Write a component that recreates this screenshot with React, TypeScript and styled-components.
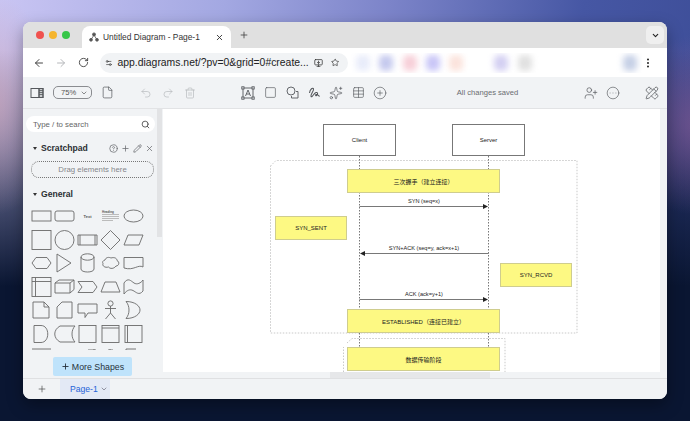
import styled, { createGlobalStyle } from "styled-components";
import {
  ArrowLeft,
  ArrowRight,
  ChevronDown,
  CircleEllipsis,
  CircleHelp,
  CirclePlus,
  EllipsisVertical,
  File,
  MonitorDown,
  Pencil,
  PencilRuler,
  Plus,
  Redo2,
  RotateCw,
  Search,
  Settings2,
  Sparkles,
  Square,
  Star,
  Table,
  Trash2,
  Undo2,
  UserPlus,
  X,
} from "lucide-react";
import type { ReactNode } from "react";

const GlobalStyle = createGlobalStyle`
  html, body {
    margin: 0;
    width: 690px;
    height: 421px;
    overflow: hidden;
  }
  body {
    font-family: "Liberation Sans", Arial, sans-serif;
  }
`;

const Desktop = styled.div`
  width: 690px;
  height: 421px;
  box-sizing: border-box;
  padding: 22px 23px;
  background:
    radial-gradient(90px 90px at 700px 125px, rgba(130, 90, 150, 0.75), transparent),
    radial-gradient(60px 110px at -5px 105px, rgba(205, 165, 185, 0.7), transparent),
    linear-gradient(180deg, rgba(9, 20, 48, 0) 12%, rgba(9, 20, 48, 0.55) 40%, #0a1632 68%),
    linear-gradient(98deg, #c9c5f3 0%, #a3a8e2 30%, #7c84c9 52%, #4657a4 78%, #3c4c96 100%);
`;

const Window = styled.div`
  width: 644px;
  height: 377px;
  border-radius: 8px;
  overflow: hidden;
  display: flex;
  flex-direction: column;
  background: #f1f3f5;
  box-shadow: 0 6px 16px rgba(0, 0, 0, 0.35);
`;

const TabStrip = styled.div`
  height: 26px;
  flex: none;
  display: flex;
  align-items: flex-end;
  background: #e0e0e0;
`;

const Lights = styled.div`
  display: flex;
  gap: 5px;
  align-self: center;
  padding: 0 0 0 13px;
  width: 59px;
  box-sizing: border-box;
`;

const Light = styled.span<{ $color: string }>`
  width: 8px;
  height: 8px;
  border-radius: 50%;
  background: ${(p) => p.$color};
`;

const ActiveTab = styled.div`
  width: 149px;
  height: 22px;
  box-sizing: border-box;
  padding: 0 7px 0 7px;
  display: flex;
  align-items: center;
  gap: 4px;
  background: #fff;
  border-radius: 8px 8px 0 0;
  font-size: 8.4px;
  color: #333;
`;

const TabTitle = styled.span`
  flex: 1;
  white-space: nowrap;
`;

const NewTab = styled.div`
  margin-left: 8px;
  align-self: center;
  display: flex;
  color: #444;
`;

const StripEnd = styled.div`
  margin-left: auto;
  margin-right: 3px;
  align-self: center;
  width: 18px;
  height: 18px;
  border-radius: 5px;
  background: #efefef;
  display: flex;
  align-items: center;
  justify-content: center;
  color: #222;
`;

const AddressRow = styled.div`
  height: 29px;
  flex: none;
  display: flex;
  align-items: center;
  background: #fff;
  padding: 0 0 0 5px;
`;

const NavButton = styled.div<{ $color?: string }>`
  width: 22px;
  height: 22px;
  display: flex;
  align-items: center;
  justify-content: center;
  color: ${(p) => p.$color || "#444"};
`;

const UrlPill = styled.div`
  width: 248px;
  height: 20px;
  margin-left: 6px;
  flex: none;
  box-sizing: border-box;
  padding: 0 5px 0 5px;
  border-radius: 10px;
  background: #f1f3f5;
  display: flex;
  align-items: center;
  gap: 5px;
  color: #333;
`;

const UrlText = styled.span`
  flex: 1;
  font-size: 10.4px;
  color: #222;
  white-space: nowrap;
`;

const Extensions = styled.div`
  width: 292px;
  height: 20px;
  margin-left: 2px;
  flex: none;
  display: flex;
  align-items: center;
  padding-left: 6px;
  box-sizing: border-box;
  overflow: hidden;
`;

const ExtBlob = styled.span<{ $color: string; $gap: number }>`
  width: 14px;
  height: 16px;
  flex: none;
  margin-right: ${(p) => p.$gap}px;
  border-radius: 5px;
  background: ${(p) => p.$color};
  filter: blur(3px);
`;

const Toolbar = styled.div`
  height: 32px;
  flex: none;
  box-sizing: border-box;
  padding: 0 4px 0 3px;
  display: flex;
  align-items: center;
  background: #f1f3f5;
  border-bottom: 1px solid #e2e3e5;
`;

const ToolButton = styled.div<{ $left?: number; $muted?: boolean }>`
  width: 22px;
  height: 22px;
  flex: none;
  margin-left: ${(p) => p.$left || 0}px;
  display: flex;
  align-items: center;
  justify-content: center;
  color: ${(p) => (p.$muted ? "#b4b6ba" : "#55585c")};
`;

const ZoomPill = styled.div`
  width: 39px;
  height: 13px;
  margin-left: 5px;
  flex: none;
  box-sizing: border-box;
  padding: 0 3px 0 7px;
  border: 1px solid #8a8c90;
  border-radius: 5px;
  display: flex;
  align-items: center;
  justify-content: space-between;
  font-size: 7.6px;
  color: #555;
`;

const SaveStatus = styled.div`
  flex: 1;
  text-align: center;
  font-size: 7.6px;
  color: #6a6c70;
  padding-left: 4px;
`;

const Main = styled.div`
  flex: 1;
  min-height: 0;
  display: flex;
`;

const Sidebar = styled.div`
  position: relative;
  width: 140px;
  flex: none;
  box-sizing: border-box;
  padding: 7px 8px 0 3px;
  display: flex;
  flex-direction: column;
  background: #f1f3f5;
`;

const SideThumb = styled.div`
  position: absolute;
  top: 0;
  right: 1px;
  width: 5px;
  height: 128px;
  background: #e2e3e5;
`;

const SearchBox = styled.div`
  height: 16px;
  flex: none;
  box-sizing: border-box;
  padding: 0 5px 0 7px;
  border-radius: 8px;
  background: #fff;
  display: flex;
  align-items: center;
  justify-content: space-between;
  font-size: 7.8px;
  color: #666;
`;

const SectionHeader = styled.div`
  height: 16px;
  margin-top: 8px;
  flex: none;
  display: flex;
  align-items: center;
  padding-left: 7px;
  font-size: 8.6px;
  font-weight: bold;
  color: #2c2f33;
`;

const Caret = styled.span`
  width: 0;
  height: 0;
  margin-right: 4px;
  border-left: 2.5px solid transparent;
  border-right: 2.5px solid transparent;
  border-top: 3px solid #333;
`;

const HeaderActions = styled.div`
  margin-left: auto;
  display: flex;
  gap: 3px;
  padding-right: 1px;
  color: #6a6c70;
`;

const DropZone = styled.div`
  height: 17px;
  margin: 5px 1px 0 5px;
  flex: none;
  box-sizing: border-box;
  border: 1px dotted #777;
  border-radius: 8px;
  display: flex;
  align-items: center;
  justify-content: center;
  font-size: 7.8px;
  color: #85878b;
`;

const ShapeGrid = styled.div`
  height: 146px;
  margin: 2px 0 0 4px;
  flex: none;
  overflow: hidden;
  display: grid;
  grid-template-columns: repeat(5, 23px);
  grid-auto-rows: 23.5px;
`;

const ShapeIcon = styled.svg`
  width: 23px;
  height: 24px;
  fill: none;
  stroke: #6a6a6a;
  stroke-width: 0.9;
`;

const MoreShapes = styled.div`
  width: 79px;
  height: 19px;
  margin: 7px 0 0 27px;
  flex: none;
  display: flex;
  align-items: center;
  justify-content: center;
  gap: 2px;
  border-radius: 2px;
  background: #bfe3fb;
  font-size: 8.8px;
  color: #27323c;
`;

const CanvasColumn = styled.div`
  flex: 1;
  min-width: 0;
  display: flex;
  flex-direction: column;
`;

const CanvasRow = styled.div`
  flex: 1;
  min-height: 0;
  display: flex;
`;

const Canvas = styled.div`
  position: relative;
  flex: 1;
  overflow: hidden;
  background: #fff;
`;

const VScroll = styled.div`
  width: 7px;
  flex: none;
  background: #f1f3f5;
`;

const HScroll = styled.div`
  height: 6px;
  flex: none;
  padding-left: 167px;
  background: #f1f3f5;
`;

const HThumb = styled.div`
  width: 160px;
  height: 100%;
  background: #e6e7e9;
`;

const DiagramLines = styled.svg`
  position: absolute;
  left: 0;
  top: 0;
`;

const Node = styled.div<{ $x: number; $y: number; $w: number; $h: number; $plain?: boolean }>`
  position: absolute;
  left: ${(p) => p.$x}px;
  top: ${(p) => p.$y}px;
  width: ${(p) => p.$w}px;
  height: ${(p) => p.$h}px;
  box-sizing: border-box;
  display: flex;
  align-items: center;
  justify-content: center;
  font-size: 6px;
  white-space: nowrap;
  color: #222;
  font-family: "Liberation Sans", "Noto Sans CJK SC", sans-serif;
  background: ${(p) => (p.$plain ? "#fff" : "#fdf983")};
  border: 1px solid ${(p) => (p.$plain ? "#777" : "#cfcd8e")};
`;

const ArrowLabel = styled.div<{ $x: number; $y: number }>`
  position: absolute;
  left: ${(p) => p.$x}px;
  top: ${(p) => p.$y}px;
  transform: translateX(-50%);
  font-size: 5.6px;
  line-height: 7px;
  white-space: nowrap;
  color: #222;
`;

const Footer = styled.div`
  height: 21px;
  flex: none;
  box-sizing: border-box;
  display: flex;
  align-items: stretch;
  background: #f1f3f5;
  border-top: 1px solid #dfe0e2;
`;

const AddPage = styled.div`
  width: 37px;
  display: flex;
  align-items: center;
  justify-content: center;
  color: #444;
`;

const PageTab = styled.div`
  width: 50px;
  box-sizing: border-box;
  padding-left: 10px;
  display: flex;
  align-items: center;
  gap: 2px;
  background: #e3e9f5;
  font-size: 8.6px;
  color: #2563d8;
`;

function FavIcon() {
  return (
    <svg width="10" height="10" viewBox="0 0 10 10" fill="#555" stroke="#555" strokeWidth="0.8">
      <circle cx="5" cy="2.4" r="1.5" />
      <circle cx="2" cy="7.8" r="1.4" />
      <circle cx="8" cy="7.8" r="1.4" />
      <path d="M5 3 L2 7.8 M5 3 L8 7.8" fill="none" />
    </svg>
  );
}

function PanelIcon() {
  return (
    <svg width="14" height="12" viewBox="0 0 14 12" fill="none" stroke="#55585c" strokeWidth="1">
      <rect x="1" y="1.5" width="12" height="9" />
      <path d="M9 1.5 V10.5" />
      <path d="M9 3.5 H13 M9 5.5 H13 M9 7.5 H13" strokeWidth="0.8" />
      <rect x="9" y="1.5" width="4" height="9" fill="#55585c" fillOpacity="0.25" />
    </svg>
  );
}

function TextToolIcon() {
  return (
    <svg width="14" height="14" viewBox="0 0 14 14" fill="none" stroke="#55585c" strokeWidth="0.9">
      <rect x="2" y="2" width="10" height="10" />
      <rect x="0.8" y="0.8" width="2.2" height="2.2" fill="#f1f3f5" />
      <rect x="11" y="0.8" width="2.2" height="2.2" fill="#f1f3f5" />
      <rect x="0.8" y="11" width="2.2" height="2.2" fill="#f1f3f5" />
      <rect x="11" y="11" width="2.2" height="2.2" fill="#f1f3f5" />
      <path d="M4.5 10 L7 4 L9.5 10 M5.4 8 H8.6" />
    </svg>
  );
}

function ShapesToolIcon() {
  return (
    <svg width="13" height="13" viewBox="0 0 13 13" fill="none" stroke="#55585c" strokeWidth="0.9">
      <circle cx="5" cy="5" r="4" />
      <path d="M10 5.5 H12 V12 H5.5 V10" />
    </svg>
  );
}

function FreehandIcon() {
  return (
    <svg width="13" height="13" viewBox="0 0 13 13" fill="none" stroke="#55585c" strokeWidth="1.1">
      <path d="M1.5 7 C2 3 5 1 5.5 3 C6 5 2 9 3 10.5 C4 12 6 7 8 6.5 C10 6 10 8.5 8.5 9.5 C7.5 10.2 7 8.5 8.5 8.5 C10 8.5 11 10 11.5 10.5" />
    </svg>
  );
}

function Shape({ children }: { children?: ReactNode }) {
  return <ShapeIcon viewBox="0 0 23 24">{children}</ShapeIcon>;
}

const shapes: ReactNode[] = [
  <rect x="2" y="7" width="19" height="10" />,
  <rect x="2" y="7" width="19" height="10" rx="2" />,
  <text x="11.5" y="13.5" fontSize="4" fontWeight="bold" fill="#555" stroke="none" textAnchor="middle" fontFamily="Liberation Sans">Text</text>,
  <>
    <text x="3" y="8.5" fontSize="3" fontWeight="bold" fill="#555" stroke="none" fontFamily="Liberation Sans">Heading</text>
    <path d="M3 10.5 H20 M3 12.5 H20 M3 14.5 H20 M3 16.5 H14" stroke="#bbb" strokeWidth="1" />
  </>,
  <ellipse cx="11.5" cy="12" rx="9.5" ry="6" />,

  <rect x="2" y="2.5" width="19" height="19" />,
  <circle cx="11.5" cy="12" r="9.5" />,
  <path d="M2 7 H21 V17 H2 Z M4 7 V17 M19 7 V17" />,
  <path d="M11.5 2.5 L21 12 L11.5 21.5 L2 12 Z" />,
  <path d="M6 7 H21 L17 17 H2 Z" />,

  <path d="M6 6.5 H17 L21 12 L17 17.5 H6 L2 12 Z" />,
  <path d="M4 3 L18 12 L4 21 Z" />,
  <>
    <ellipse cx="11.5" cy="6" rx="6.5" ry="3.2" />
    <path d="M5 6 V18 C5 22 18 22 18 18 V6" />
  </>,
  <path d="M6 9 C7 6 10 6 12 7 C15 6 18 7 18 9.5 C21 11 20 15 17 15 C15 18 11 18 9.5 16 C6 17 3 15 4 12.5 C3 11 4 9.5 6 9 Z" />,
  <path d="M2 6.5 H21 V16 C16 13 12 20 2 17 Z" />,

  <>
    <rect x="2" y="2.5" width="19" height="19" />
    <path d="M5.5 2.5 V21.5 M2 6.5 H21" />
  </>,
  <path d="M2 8 L6 5 H21 V14.5 L17 18 H2 Z M2 8 H17 V18 M17 8 L21 5" />,
  <path d="M2 6.5 H17 L21 12 L17 17.5 H2 L6 12 Z" />,
  <path d="M6 7 H17 L21 17 H2 Z" />,
  <path d="M2 8 C6 2 9 6 12 8 C15 10 19 8 21 5 V16 C17 21 14 17 11 15.5 C8 14 5 15 2 19 Z" />,

  <path d="M3 4 H14 L19 9 V20 H3 Z M14 4 V9 H19" />,
  <path d="M9 4 H19 V20 H4 V9 Z" />,
  <path d="M2 6 H21 V15 H12 L9 19.5 V15 H2 Z" />,
  <>
    <circle cx="11.5" cy="5.5" r="2.6" />
    <path d="M11.5 8 V15 M6 10.5 H17 M11.5 15 L6.5 21 M11.5 15 L16.5 21" />
  </>,
  <path d="M4 3.5 C13 3.5 18 8 18 12 C18 16 13 20.5 4 20.5 C8 16 8 8 4 3.5 Z" />,

  <path d="M4 3.5 H11 C20 3.5 20 20.5 11 20.5 H4 Z" />,
  <path d="M7 4 H22 C18 8 18 16 22 20 H7 C0 16 0 8 7 4 Z" />,
  <rect x="3" y="3.5" width="17" height="17" />,
  <>
    <rect x="3" y="3.5" width="17" height="17" />
    <path d="M3 6 H20" />
  </>,
  <>
    <rect x="3" y="3.5" width="17" height="17" />
    <path d="M5.5 3.5 V20.5" />
  </>,

  <path d="M2 4 H21" />,
  <path d="" />,
  <path d="M12 5 H20 M18 4 V7" />,
  <path d="M9 5 H14 M11 4 V7" />,
  <path d="M4 6 V4 H14" />,
];

const blobs: [string, number][] = [
  ["#e8ecfa", 9],
  ["#c5c9ee", 10],
  ["#f7cfd8", 9],
  ["#c9c6f7", 9],
  ["#fbe3dc", 31],
  ["#d3cff2", 10],
  ["#e0e0e0", 91],
  ["#c6d0e6", 0],
];

export default function App() {
  return (
    <>
      <GlobalStyle />
      <Desktop>
        <Window>
          <TabStrip>
            <Lights>
              <Light $color="#f0524f" />
              <Light $color="#f5b52e" />
              <Light $color="#37c648" />
            </Lights>
            <ActiveTab>
              <FavIcon />
              <TabTitle>Untitled Diagram - Page-1</TabTitle>
              <X size={9} strokeWidth={2.4} color="#333" />
            </ActiveTab>
            <NewTab>
              <Plus size={10} strokeWidth={2} />
            </NewTab>
            <StripEnd>
              <ChevronDown size={9} strokeWidth={3} />
            </StripEnd>
          </TabStrip>

          <AddressRow>
            <NavButton><ArrowLeft size={12} /></NavButton>
            <NavButton $color="#b5b7ba"><ArrowRight size={12} /></NavButton>
            <NavButton><RotateCw size={11} /></NavButton>
            <UrlPill>
              <Settings2 size={10} />
              <UrlText>app.diagrams.net/?pv=0&amp;grid=0#create...</UrlText>
              <MonitorDown size={12} />
              <Star size={11} style={{ marginLeft: 3, marginRight: 4 }} />
            </UrlPill>
            <Extensions>
              {blobs.map(([color, gap], i) => (
                <ExtBlob key={i} $color={color} $gap={gap} />
              ))}
            </Extensions>
            <EllipsisVertical size={12} color="#333" strokeWidth={2.4} />
          </AddressRow>

          <Toolbar>
            <ToolButton><PanelIcon /></ToolButton>
            <ZoomPill>
              75%
              <ChevronDown size={8} />
            </ZoomPill>
            <ToolButton $left={4}><File size={13} strokeWidth={1.3} /></ToolButton>
            <ToolButton $left={17} $muted><Undo2 size={12} strokeWidth={1.3} /></ToolButton>
            <ToolButton $muted><Redo2 size={12} strokeWidth={1.3} /></ToolButton>
            <ToolButton $muted><Trash2 size={12} strokeWidth={1.3} /></ToolButton>
            <ToolButton $left={36}><TextToolIcon /></ToolButton>
            <ToolButton><Square size={13} strokeWidth={1.2} /></ToolButton>
            <ToolButton><ShapesToolIcon /></ToolButton>
            <ToolButton><FreehandIcon /></ToolButton>
            <ToolButton><Sparkles size={14} strokeWidth={1.2} /></ToolButton>
            <ToolButton><Table size={13} strokeWidth={1.2} /></ToolButton>
            <ToolButton><CirclePlus size={14} strokeWidth={1.1} /></ToolButton>
            <SaveStatus>All changes saved</SaveStatus>
            <ToolButton><UserPlus size={14} strokeWidth={1.2} /></ToolButton>
            <ToolButton><CircleEllipsis size={14} strokeWidth={1.1} /></ToolButton>
            <ToolButton $left={17}><PencilRuler size={14} strokeWidth={1.3} /></ToolButton>
          </Toolbar>

          <Main>
            <Sidebar>
              <SideThumb />
              <SearchBox>
                Type / to search
                <Search size={9} strokeWidth={2.2} color="#444" />
              </SearchBox>
              <SectionHeader>
                <Caret />
                Scratchpad
                <HeaderActions>
                  <CircleHelp size={9} />
                  <Plus size={9} />
                  <Pencil size={9} />
                  <X size={9} />
                </HeaderActions>
              </SectionHeader>
              <DropZone>Drag elements here</DropZone>
              <SectionHeader>
                <Caret />
                General
              </SectionHeader>
              <ShapeGrid>
                {shapes.map((s, i) => (
                  <Shape key={i}>{s}</Shape>
                ))}
              </ShapeGrid>
              <MoreShapes>
                <Plus size={9} strokeWidth={2.4} />
                More Shapes
              </MoreShapes>
            </Sidebar>

            <CanvasColumn>
              <CanvasRow>
                <Canvas>
                  <DiagramLines width="497" height="263" viewBox="0 0 497 263" fill="none">
                    <g stroke="#c9c9c9" strokeWidth="1" strokeDasharray="1.5 1.5">
                      <path d="M107.5 57 L113 51.5 H414 V224 H107.5 Z" />
                      <path d="M184 234 L189 229.5 H342 V263 M180.5 263 V238" />
                    </g>
                    <g stroke="#777" strokeWidth="1" strokeDasharray="1.5 1.5">
                      <path d="M196.5 47 V263" />
                      <path d="M325.5 47 V263" />
                    </g>
                    <g stroke="#555" strokeWidth="0.8">
                      <path d="M196.5 97.5 H321" />
                      <path d="M201 144.5 H325.5" />
                      <path d="M196.5 190.5 H321" />
                    </g>
                    <g fill="#222">
                      <path d="M325 97.5 L320 95 V100 Z" />
                      <path d="M197 144.5 L202 142 V147 Z" />
                      <path d="M325 190.5 L320 188 V193 Z" />
                    </g>
                  </DiagramLines>
                  <Node $plain $x={160} $y={15} $w={73} $h={32}>Client</Node>
                  <Node $plain $x={289} $y={15} $w={73} $h={32}>Server</Node>
                  <Node $x={184} $y={60} $w={153} $h={24}>三次握手（建立连接）</Node>
                  <Node $x={112} $y={107} $w={72} $h={24}>SYN_SENT</Node>
                  <Node $x={337} $y={154} $w={72} $h={24}>SYN_RCVD</Node>
                  <Node $x={184} $y={200} $w={153} $h={24}>ESTABLISHED（连接已建立）</Node>
                  <Node $x={184} $y={238} $w={153} $h={24}>数据传输阶段</Node>
                  <ArrowLabel $x={261} $y={89}>SYN (seq=x)</ArrowLabel>
                  <ArrowLabel $x={261} $y={136}>SYN+ACK (seq=y, ack=x+1)</ArrowLabel>
                  <ArrowLabel $x={261} $y={182}>ACK (ack=y+1)</ArrowLabel>
                </Canvas>
                <VScroll />
              </CanvasRow>
              <HScroll>
                <HThumb />
              </HScroll>
            </CanvasColumn>
          </Main>

          <Footer>
            <AddPage><Plus size={10} strokeWidth={1.6} /></AddPage>
            <PageTab>
              Page-1
              <ChevronDown size={8} color="#667" />
            </PageTab>
          </Footer>
        </Window>
      </Desktop>
    </>
  );
}
